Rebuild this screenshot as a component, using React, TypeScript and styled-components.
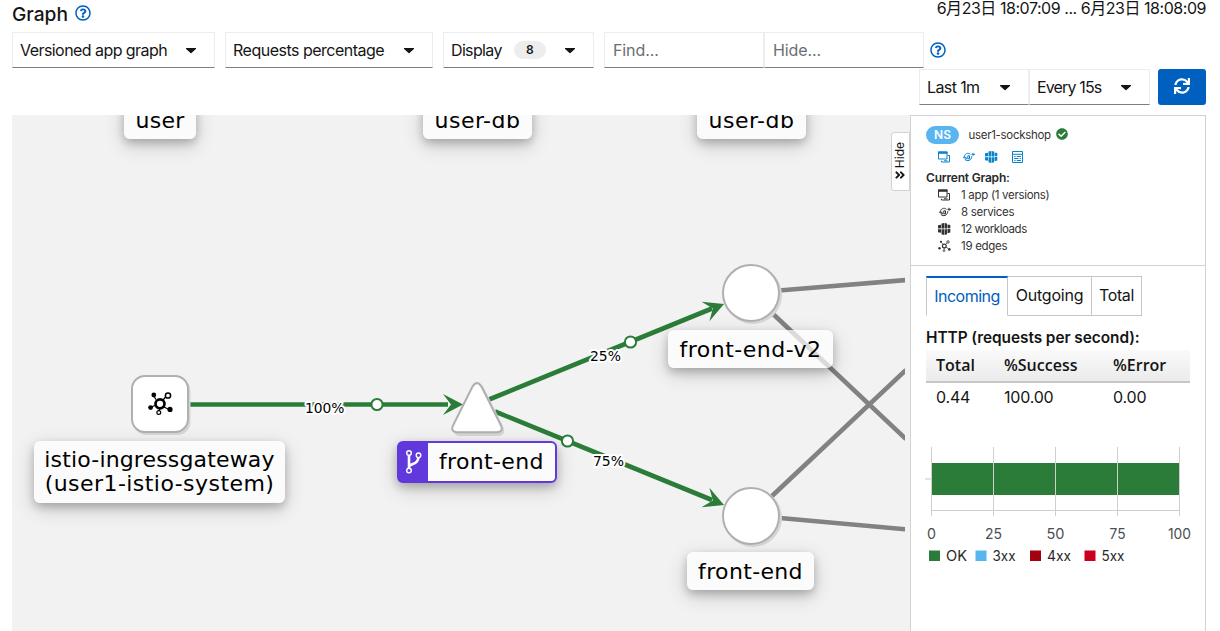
import React from "react";
import styled, { createGlobalStyle, css } from "styled-components";
import {
  FaAngleDoubleRight,
  FaCaretDown,
  FaCheckCircle,
  FaRegQuestionCircle,
  FaSync,
} from "react-icons/fa";

const GlobalStyle = createGlobalStyle`
  * { box-sizing: border-box; }
  body {
    margin: 0;
    background: #fff;
    color: #151515;
    font-family: Inter, "Noto Sans CJK JP", sans-serif;
    font-size: 16px;
    overflow: hidden;
  }
`;

const Page = styled.div`
  width: 1220px;
  height: 631px;
  padding: 0 14px 0 12px;
  overflow: hidden;
  display: flex;
  flex-direction: column;
`;

const Header = styled.header`
  display: flex;
  justify-content: space-between;
  height: 32px;
`;

const Title = styled.h1`
  display: flex;
  align-items: center;
  gap: 7px;
  height: 28px;
  margin: 0;
  font-size: 19.2px;
  font-weight: 500;
  letter-spacing: 0;
  svg { width: 16px; height: 16px; margin-top: -2px; color: #0060c0; }
`;

const Text = styled.span<{ $ls?: number }>`
  letter-spacing: ${(p) => p.$ls ?? 0}px;
  white-space: nowrap;
`;

const Period = styled.div`
  height: 16px;
  line-height: 16px;
  white-space: nowrap;
`;

const Toolbar = styled.div`
  display: flex;
  align-items: center;
  height: 36px;
`;

const boxed = css`
  height: 36px;
  background: #fff;
  border: 1px solid #ededed;
  border-bottom-color: #7c7f83;
  padding: 0 8px;
  font: inherit;
  color: inherit;
`;

const Select = styled.button<{ $w: number; $gap?: number }>`
  ${boxed}
  width: ${(p) => p.$w}px;
  margin-right: ${(p) => p.$gap ?? 0}px;
  padding-left: 7px;
  padding-right: 18px;
  padding-bottom: 1px;
  display: flex;
  align-items: center;
  justify-content: space-between;
  line-height: 20px;
  svg { width: 10px; height: 16px; flex: none; margin-top: 1px; transform: scaleX(1.1); }
`;

const Badge = styled.span`
  width: 32px;
  height: 18px;
  margin: 0 17px 0 10px;
  border-radius: 9px;
  background: #ededed;
  font-size: 12px;
  line-height: 18px;
  font-weight: 600;
  text-align: center;
`;

const Field = styled.input<{ $w: number }>`
  ${boxed}
  width: ${(p) => p.$w}px;
  border-radius: 0;
  letter-spacing: -0.1px;
  &::placeholder { color: #6a6e73; opacity: 1; }
`;

const HelpIcon = styled(FaRegQuestionCircle)`
  width: 16px;
  height: 16px;
  margin-left: 6px;
  color: #0060c0;
`;

const TimeBar = styled(Toolbar)`
  justify-content: flex-end;
  margin-top: 1px;
`;

const Refresh = styled.button`
  width: 48px;
  height: 36px;
  border: 0;
  border-radius: 3px;
  background: #0060c0;
  color: #fff;
  display: grid;
  place-items: center;
  svg { width: 16px; height: 16px; margin-top: -2px; }
`;

const Main = styled.main`
  display: flex;
  margin-top: 10px;
  height: 516px;
`;

const Canvas = styled.section`
  position: relative;
  width: 898px;
  background: #f2f2f2;
  overflow: hidden;
`;

const Edges = styled.svg`
  position: absolute;
  left: 0;
  top: 0;
`;

const NodeLabel = styled.div<{ $x: number; $y: number; $w: number; $h: number; $ls?: number }>`
  position: absolute;
  left: ${(p) => p.$x}px;
  top: ${(p) => p.$y}px;
  width: ${(p) => p.$w}px;
  height: ${(p) => p.$h}px;
  padding-top: ${(p) => (p.$h < 40 ? 1 : 0)}px;
  display: flex;
  flex-direction: column;
  align-items: center;
  justify-content: center;
  border-radius: 6px;
  background: rgba(255, 255, 255, 0.7);
  box-shadow: 0 4px 8px rgba(0, 0, 0, 0.2), 0 6px 20px rgba(0, 0, 0, 0.19);
  color: #000;
  font-family: "DejaVu Sans", sans-serif;
  font-size: 22px;
  line-height: 24px;
  letter-spacing: ${(p) => p.$ls ?? 0.1}px;
  white-space: pre;
`;

const AppLabel = styled(NodeLabel)`
  flex-direction: row;
  border: 2px solid #6138dc;
  justify-content: flex-start;
  background: #fbfbfb;
  span { padding-left: 11px; }
`;

const BranchBox = styled.div`
  width: 30px;
  height: 40px;
  margin-left: -1px;
  background: #6138dc;
  border-radius: 4px 0 0 4px;
  display: grid;
  place-items: center;
`;

const HideTab = styled.button`
  position: absolute;
  left: 879px;
  top: 17px;
  width: 19px;
  height: 59px;
  border: 1px solid #d2d2d2;
  border-radius: 3px 0 0 3px;
  background: #fff;
  display: flex;
  flex-direction: column;
  align-items: center;
  justify-content: flex-end;
  gap: 1px;
  padding: 0 1px 9px 0;
  color: #151515;
  font: 12px Inter, sans-serif;
  span { writing-mode: vertical-rl; transform: rotate(180deg); line-height: 14px; }
  svg { width: 12px; height: 12px; }
`;

const Panel = styled.aside`
  width: 296px;
  border: 1px solid #d2d2d2;
  border-bottom: 0;
  background: #fff;
`;

const Summary = styled.div`
  height: 150px;
  padding: 9px 15px 0;
  border-bottom: 1px solid #d2d2d2;
  font-size: 11.5px;
`;

const Namespace = styled.div`
  display: flex;
  align-items: center;
  height: 20px;
  color: #333;
  svg { width: 12px; height: 12px; margin: -2px 0 0 5px; color: #2a7c38; }
`;

const NsBadge = styled.span`
  width: 33px;
  height: 18px;
  margin-right: 9.5px;
  border-radius: 9px;
  background: #57b5f0;
  color: #fff;
  font-size: 12px;
  font-weight: 600;
  line-height: 18px;
  text-align: center;
`;

const IconRow = styled.div`
  display: flex;
  gap: 10.5px;
  height: 24px;
  padding: 6px 0 0 12px;
  color: #0a84c6;
  svg:last-child { margin-left: 2.5px; }
`;

const GraphTitle = styled.div`
  height: 17px;
  line-height: 17px;
  font-size: 12px;
  font-weight: 600;
  color: #292929;
`;

const Count = styled.div`
  display: flex;
  align-items: center;
  gap: 10px;
  height: 17px;
  padding-left: 12px;
  color: #333;
`;

const Tabs = styled.div`
  display: flex;
  margin: 10px 0 0 15px;
  height: 40px;
`;

const Tab = styled.button<{ $w: number; $active?: boolean }>`
  width: ${(p) => p.$w}px;
  height: 40px;
  padding: 0 0 2px;
  background: #fff;
  border: 1px solid #c6c6c6;
  border-left-width: ${(p) => (p.$active ? "1px" : "0")};
  border-top: ${(p) => (p.$active ? "2px solid #0060c0" : "1px solid #c6c6c6")};
  border-bottom-color: ${(p) => (p.$active ? "transparent" : "#c6c6c6")};
  color: ${(p) => (p.$active ? "#0060c0" : "#151515")};
  font: 16px Inter, sans-serif;
`;

const Heading = styled.h2`
  margin: 13px 15px 0;
  height: 21px;
  line-height: 18px;
  font-size: 15.4px;
  font-weight: 600;
  white-space: nowrap;
`;

const Rates = styled.div`
  width: 264px;
  margin-left: 15px;
`;

const RateRow = styled.div<{ $head?: boolean }>`
  display: grid;
  grid-template-columns: 68px 109px 1fr;
  padding-left: 10px;
  height: 33px;
  ${(p) =>
    p.$head
      ? css`
          line-height: 31px;
          font-family: "Open Sans", sans-serif;
          font-weight: 600;
          background: linear-gradient(#fafafa, #ebebeb);
          border-bottom: 2px solid #c7c7c7;
        `
      : css`
          line-height: 29px;
          letter-spacing: -0.2px;
        `}
`;

const Chart = styled.svg`
  display: block;
  margin-top: 21px;
`;

type IconKind = "bundle" | "service" | "workload" | "config" | "edges";

const Glyph = ({ kind }: { kind: IconKind }) => (
  <svg width={13} height={12} viewBox="0 0 13 12" fill="none" stroke="currentColor" strokeWidth={1}>
    {kind === "bundle" && (
      <>
        <path d="M.5 1h8.5v7H.5z" />
        <path d="M0 .5h9.500v2.300H0z" fill="currentColor" stroke="none" />
        <path d="M9.500 4.500h2v6.500H3.500V9.800M6 9.800h3.500" />
      </>
    )}
    {kind === "service" && (
      <>
        <path d="M8.500 3.300C6 1.200 2.800 2.600 2.300 5.800M3 8.500c2 2.200 6.500 1.300 6.800-3.300M1 6.300h3.500M2.500 7.800h2.800" />
        <path d="M5.800 4.800h1.700v3h-1.700zM9.500 3.300H13M11 1.800v3" />
      </>
    )}
    {kind === "workload" && (
      <>
        <path d="M0 2.300 3 1.800v3.500l-3 .2zM0 6.300 3 6.200v3.500L0 9.200zM9.500 1.400l2.800.6v3.200H9.500zM9.500 6h2.800v3.500l-2.800.8z" fill="currentColor" stroke="none" />
        <path d="M3.500.6 6.100 0v5.600H3.500zM6.600 0 9 .6v4.900H6.600zM3.500 6.200h2.600V12l-2.600-.8zM6.600 6.200H9v5l-2.400.8z" fill="currentColor" stroke="none" />
      </>
    )}
    {kind === "config" && (
      <>
        <path d="M1.500.5h10v11h-10zM1.500 3.300h10" />
        <path d="M3.200 5.500h1.300M5.700 5.500h4.200M3.200 7.500h4.200M8.600 7.500h1.300M3.200 9.500h1.300M5.700 9.500h4.200" />
      </>
    )}
    {kind === "edges" && (
      <>
        <circle cx={6.300} cy={6} r={1.900} strokeWidth={1.200} />
        <circle cx={10} cy={1.900} r={1.200} strokeWidth={0.900} />
        <circle cx={6} cy={10.600} r={0.900} strokeWidth={0.800} />
        <path d="M7.500 4.500 9 3M5.200 4.600 3.500 2.500M8 7l2.500 1.800M6.200 8v1.600" strokeWidth={0.700} />
        <g fill="currentColor" stroke="none">
          <circle cx={3} cy={1.800} r={1.100} />
          <circle cx={1.500} cy={8.300} r={1.200} />
          <circle cx={11.300} cy={9.400} r={1.300} />
        </g>
      </>
    )}
  </svg>
);

const Arrow = ({ x, y, angle }: { x: number; y: number; angle: number }) => (
  <path
    d="M0 0 -20 -10.500 -12 0 -20 10.500Z"
    fill="#2a7c38"
    transform={`translate(${x} ${y}) rotate(${angle})`}
  />
);

const EdgeText = ({ x, y, w, children }: { x: number; y: number; w: number; children: string }) => (
  <text
    x={x}
    y={y}
    textLength={w}
    lengthAdjust="spacingAndGlyphs"
    fontFamily="DejaVu Sans, sans-serif"
    fontSize={14}
    fill="#000"
    stroke="#fff"
    strokeWidth={4}
    strokeLinejoin="round"
    paintOrder="stroke"
  >
    {children}
  </text>
);

const Graph = () => (
  <Edges width={893} height={516} viewBox="12 115 893 516">
    <g stroke="#828284" strokeWidth={4.600}>
      <path d="M779 290.500 906 280" />
      <path d="M772 313 906 439" />
      <path d="M772 496 906 370" />
      <path d="M780 518 906 529.300" />
    </g>
    <g stroke="#2a7c38" strokeWidth={4.600}>
      <path d="M189 404.500H448" />
      <path d="M489 399.500 712 308.500" />
      <path d="M495 411.500 712 500" />
    </g>
    <Arrow x={463} y={404.500} angle={0} />
    <Arrow x={724} y={304} angle={-22} />
    <Arrow x={724} y={505} angle={22} />
    <g fill="#fff" stroke="#2a7c38" strokeWidth={2}>
      <circle cx={377} cy={404.500} r={5.600} />
      <circle cx={630.500} cy={342} r={5.600} />
      <circle cx={567.500} cy={441} r={5.600} />
    </g>
    <EdgeText x={305} y={413} w={39.500}>100%</EdgeText>
    <EdgeText x={590} y={360.500} w={31}>25%</EdgeText>
    <EdgeText x={593} y={466} w={31}>75%</EdgeText>

    <g fill="#d6d6d6">
      <rect x={133.500} y={378} width={57} height={57} rx={13} />
      <circle cx={753} cy={295} r={29} />
      <circle cx={753} cy={518} r={29} />
      <path d="M474 388q5-8 10 0l19 38q4 9-5 10h-38q-9-1-5-10z" />
    </g>
    <g fill="#fff" stroke="#b0b0b0" strokeWidth={2}>
      <rect x={132} y={376} width={56} height={56} rx={13} />
      <circle cx={751} cy={293} r={28} />
      <circle cx={751} cy={516} r={28} />
      <path d="M472.300 387q4.700-8 9.400 0l19.300 38.500q3 6-4 6.800h-40q-7-.8-4-6.800z" />
    </g>

    <g stroke="#000" strokeWidth={1.200}>
      <path d="M156 399.500l-2.500-4M163 400l3-3.500M155 405.500l-5 2M164 407l5 2.500M159.500 409v2" />
      <circle cx={160} cy={403.800} r={4.500} fill="#fff" strokeWidth={2.700} />
      <circle cx={168} cy={395.500} r={2.600} fill="#fff" strokeWidth={1.500} />
      <circle cx={158.800} cy={412.500} r={1.900} fill="#fff" strokeWidth={1.200} />
    </g>
    <circle cx={153.800} cy={395} r={2.400} />
    <circle cx={150.600} cy={407.600} r={2.400} />
    <circle cx={170} cy={409.400} r={2.600} />
  </Edges>
);

const BranchIcon = () => (
  <svg width={18} height={26} viewBox="0 0 18 26" fill="none" stroke="#fff">
    <path d="M5 6v14M5 18c1-4 9-2 9.300-9" strokeWidth={2.600} />
    <g fill="#6138dc" strokeWidth={1.400}>
      <circle cx={5} cy={4} r={2.300} />
      <circle cx={5} cy={21.500} r={2.300} />
      <circle cx={14.500} cy={6.300} r={2.300} />
    </g>
  </svg>
);

const TICKS = [0, 25, 50, 75, 100];
const TICK_W = [9, 17, 18, 16, 23];
const LEGEND = [
  { name: "OK", color: "#2a7c38", x: 929, w: 21 },
  { name: "3xx", color: "#57b5f0", x: 975.5, w: 23 },
  { name: "4xx", color: "#a30010", x: 1030, w: 24 },
  { name: "5xx", color: "#cc001c", x: 1084.5, w: 23 },
];

const RateChart = () => (
  <Chart width={294} height={140} viewBox="911 437 294 140" fontFamily="Inter, sans-serif">
    <rect x={931.500} y={463} width={247.500} height={32} fill="#2a7c38" />
    <g stroke="#cfcfcf">
      {TICKS.map((t) => (
        <path key={t} d={`M${Math.floor(931.5 + t * 2.48) + 0.5} 447v69`} />
      ))}
      <path d="M931 510.500h248" />
      <path d="M925 479h6" strokeWidth={2} stroke="#e3e3e3" />
    </g>
    {TICKS.map((t, i) => (
      <text
        key={t}
        x={931.5 + t * 2.48 - TICK_W[i] / 2}
        y={539}
        textLength={TICK_W[i]}
        lengthAdjust="spacingAndGlyphs"
        fontSize={14}
        fill="#4b4e52"
      >
        {t}
      </text>
    ))}
    {LEGEND.map((l) => (
      <g key={l.name}>
        <rect x={l.x} y={550.500} width={11} height={10.500} fill={l.color} />
        <text x={l.x + 17} y={561} textLength={l.w} lengthAdjust="spacingAndGlyphs" fontSize={14} fill="#292929">
          {l.name}
        </text>
      </g>
    ))}
  </Chart>
);

export default function App() {
  return (
    <>
      <GlobalStyle />
      <Page>
        <Header>
          <Title>Graph <FaRegQuestionCircle /></Title>
          <Period><Text $ls={-0.46}>6月23日 18:07:09 ... 6月23日 18:08:09</Text></Period>
        </Header>
        <Toolbar>
          <Select $w={203} $gap={10}><Text $ls={-0.56}>Versioned app graph</Text><FaCaretDown /></Select>
          <Select $w={208} $gap={10}><Text $ls={-0.5}>Requests percentage</Text><FaCaretDown /></Select>
          <Select $w={151} $gap={10}>
            <Text $ls={-0.65}>Display</Text>
            <Badge>8</Badge>
            <FaCaretDown />
          </Select>
          <Field $w={160} placeholder="Find..." />
          <Field $w={160} placeholder="Hide..." />
          <HelpIcon />
        </Toolbar>
        <TimeBar>
          <Select $w={110}><Text $ls={-0.6}>Last 1m</Text><FaCaretDown /></Select>
          <Select $w={121} $gap={8}><Text $ls={-0.85}>Every 15s</Text><FaCaretDown /></Select>
          <Refresh><FaSync /></Refresh>
        </TimeBar>
        <Main>
          <Canvas>
            <Graph />
            <NodeLabel $x={112} $y={-14} $w={72} $h={38} $ls={0.2}>user</NodeLabel>
            <NodeLabel $x={411} $y={-14} $w={109} $h={38} $ls={0.5}>user-db</NodeLabel>
            <NodeLabel $x={685} $y={-14} $w={109} $h={38} $ls={0.5}>user-db</NodeLabel>
            <NodeLabel $x={22} $y={326} $w={251} $h={62}>
              <Text $ls={0.15}>istio-ingressgateway</Text>
              <Text $ls={0.45}>(user1-istio-system)</Text>
            </NodeLabel>
            <AppLabel $x={385} $y={326} $w={160} $h={42} $ls={0.35}>
              <BranchBox><BranchIcon /></BranchBox>
              <span>front-end</span>
            </AppLabel>
            <NodeLabel $x={656} $y={215} $w={165} $h={38} $ls={0.5}>front-end-v2</NodeLabel>
            <NodeLabel $x={675} $y={437} $w={127} $h={38} $ls={0.35}>front-end</NodeLabel>
            <HideTab>
              <span>Hide</span>
              <FaAngleDoubleRight />
            </HideTab>
          </Canvas>
          <Panel>
            <Summary>
              <Namespace>
                <NsBadge>NS</NsBadge>
                <Text $ls={-0.3}>user1-sockshop</Text>
                <FaCheckCircle />
              </Namespace>
              <IconRow>
                <Glyph kind="bundle" />
                <Glyph kind="service" />
                <Glyph kind="workload" />
                <Glyph kind="config" />
              </IconRow>
              <GraphTitle><Text $ls={-0.2}>Current Graph:</Text></GraphTitle>
              <Count><Glyph kind="bundle" /><Text $ls={-0.3}>1 app (1 versions)</Text></Count>
              <Count><Glyph kind="service" /><Text $ls={-0.3}>8 services</Text></Count>
              <Count><Glyph kind="workload" /><Text $ls={-0.45}>12 workloads</Text></Count>
              <Count><Glyph kind="edges" /><Text $ls={-0.3}>19 edges</Text></Count>
            </Summary>
            <Tabs>
              <Tab $w={82} $active><Text $ls={-0.5}>Incoming</Text></Tab>
              <Tab $w={84}><Text $ls={-0.2}>Outgoing</Text></Tab>
              <Tab $w={50}><Text $ls={-0.4}>Total</Text></Tab>
            </Tabs>
            <Heading><Text $ls={-0.05}>HTTP (requests per second):</Text></Heading>
            <Rates>
              <RateRow $head><span>Total</span><span>%Success</span><span>%Error</span></RateRow>
              <RateRow><span>0.44</span><span>100.00</span><span>0.00</span></RateRow>
            </Rates>
            <RateChart />
          </Panel>
        </Main>
      </Page>
    </>
  );
}
